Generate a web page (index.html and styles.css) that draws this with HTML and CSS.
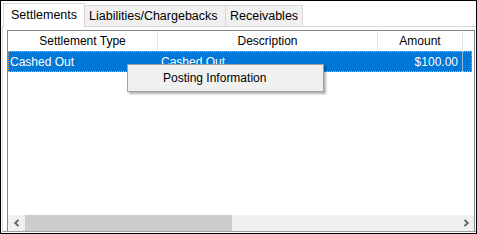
FILE: index.html
```html
<!DOCTYPE html>
<html>
<head>
  <meta charset="UTF-8">
  <title>Settlements</title>
  <link rel="stylesheet" href="styles.css">
</head>
<body>
  <div class="frame">
    <div class="tabs">
      <div class="tab active">Settlements</div>
      <div class="tab">Liabilities/Chargebacks</div>
      <div class="tab">Receivables</div>
    </div>

    <div class="panel">
      <div class="list">
        <div class="list-head">
          <div class="col c1">Settlement Type</div>
          <div class="col c2">Description</div>
          <div class="col c3">Amount</div>
          <div class="col c4"></div>
        </div>
        <div class="row selected">
          <div class="cell c1">Cashed Out</div>
          <div class="cell c2">Cashed Out</div>
          <div class="cell c3 num">$100.00</div>
          <div class="cell c4"></div>
        </div>
        <div class="list-body"></div>
        <div class="hscroll">
          <div class="arrow">
            <svg width="8" height="8" viewBox="0 0 8 8"><path d="M5.5 0.8 L2.2 4 L5.5 7.2" fill="none" stroke="#606060" stroke-width="1.8"/></svg>
          </div>
          <div class="thumb"></div>
          <div class="track"></div>
          <div class="arrow">
            <svg width="8" height="8" viewBox="0 0 8 8"><path d="M2.5 0.8 L5.8 4 L2.5 7.2" fill="none" stroke="#606060" stroke-width="1.8"/></svg>
          </div>
        </div>
      </div>
    </div>

    <!-- right-click menu over the list -->
    <div class="menu">
      <div class="menu-item">Posting Information</div>
    </div>
  </div>
</body>
</html>
```

FILE: styles.css
```css
body {
  margin: 0;
  padding: 0;
  font-family: "Liberation Sans", Arial, sans-serif;
  font-size: 12px;
  color: #000;
  background: #fff;
}
.frame {
  position: relative;
  box-sizing: border-box;
  width: 477px;
  height: 234px;
  border: 1px solid #000;
  background: #fff;
  display: flex;
  flex-direction: column;
  overflow: hidden;
}
.tabs {
  height: 25px;
  padding-left: 2px;
  display: flex;
  align-items: flex-end;
  position: relative;
  z-index: 2;
  font-size: 12.5px;
}
.tab {
  box-sizing: border-box;
  height: 21px;
  padding: 0 6px;
  display: flex;
  align-items: center;
  background: #f0f0f0;
  border: 1px solid #d9d9d9;
  border-bottom: none;
  margin-left: -1px;
  white-space: nowrap;
}
.tab:first-child {
  margin-left: 0;
}
.tab.active {
  height: 24px;
  width: 82px;
  margin-bottom: -1px;
  padding: 0 0 2px 7px;
  background: #fff;
  position: relative;
  z-index: 3;
}
.tab:nth-child(2) {
  width: 142px;
  padding-left: 4px;
}
.tab:nth-child(3) {
  width: 78px;
  padding-left: 4px;
}
.panel {
  box-sizing: border-box;
  height: 206px;
  margin: 0 0 1px 1px;
  padding: 3px 0 0 4px;
  border: 1px solid #d9d9d9;
  border-bottom-color: #a0a0a0;
  border-right: none;
  display: flex;
}
.list {
  box-sizing: border-box;
  width: 468px;
  height: 201px;
  border: 1px solid #828790;
  border-bottom: none;
  display: flex;
  flex-direction: column;
}
.list-head, .row {
  display: grid;
  grid-template-columns: 150px 220px 85px 11px;
}
.list-head {
  height: 20px;
}
.col {
  box-sizing: border-box;
  border-right: 1px solid #e5e5e5;
  display: flex;
  align-items: center;
  justify-content: center;
}
.col.c4 {
  border-right: none;
}
.row {
  height: 21px;
  width: 464px;
}
.row.selected {
  box-sizing: border-box;
  background: #0078d7;
  color: #fff;
  outline: 1px dotted #f0a050;
  outline-offset: -1px;
}
.cell {
  box-sizing: border-box;
  display: flex;
  align-items: center;
  padding: 0 3px 0 3px;
  white-space: nowrap;
}
.cell.c1 {
  padding-left: 2px;
}
.cell.c3 {
  border-left: 1px solid #0078d7;
  border-right: 1px solid #9bb8d3;
}
.cell.num {
  justify-content: flex-end;
  padding-right: 4px;
}
.list-body {
  flex: 1;
}
.hscroll {
  height: 16px;
  display: flex;
  background: #f0f0f0;
}
.arrow {
  width: 17px;
  display: flex;
  align-items: center;
  justify-content: center;
}
.thumb {
  width: 207px;
  background: #cdcdcd;
}
.track {
  flex: 1;
}
.menu {
  position: absolute;
  left: 126px;
  top: 63px;
  box-sizing: border-box;
  width: 197px;
  height: 28px;
  background: #f0f0f0;
  border: 1px solid #a0a0a0;
  box-shadow: 2px 2px 2px rgba(0, 0, 0, 0.3);
  z-index: 5;
}
.menu-item {
  height: 100%;
  display: flex;
  align-items: center;
  padding-left: 35px;
  box-sizing: border-box;
}
```
